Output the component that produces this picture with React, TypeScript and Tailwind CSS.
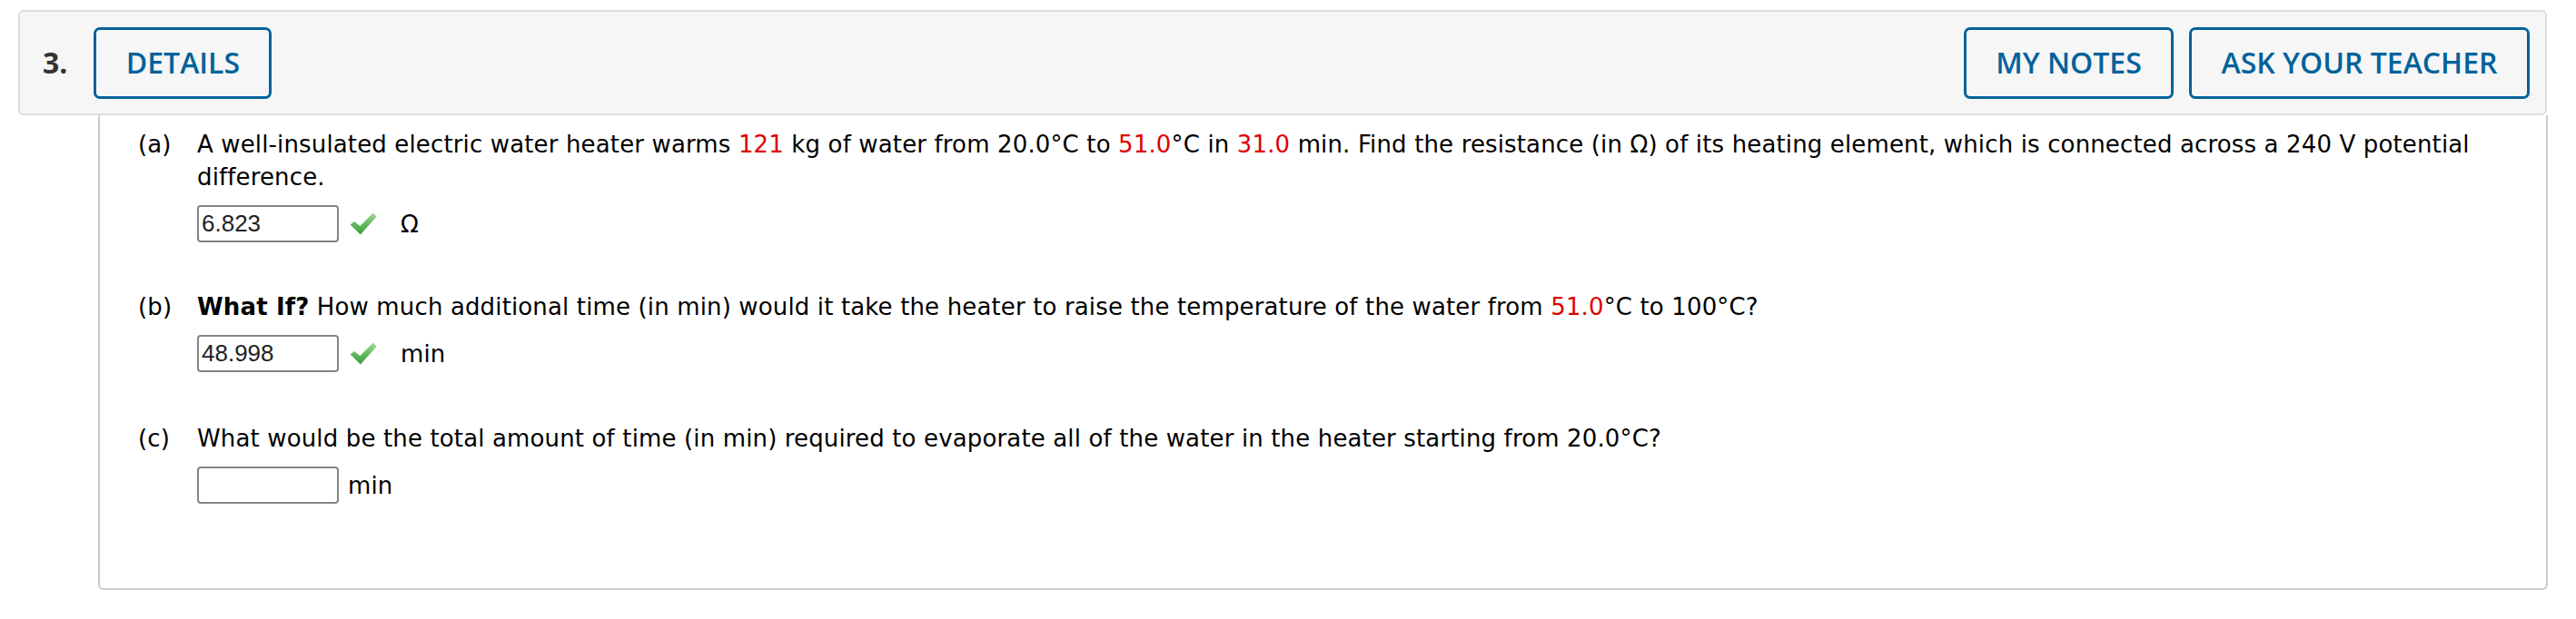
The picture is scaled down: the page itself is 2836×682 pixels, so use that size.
import type { ReactNode } from "react";

const body = "font-['DejaVu_Sans',Verdana,sans-serif] text-[26px] leading-[36px] tracking-[0.14px] text-black";

function Red({ children }: { children: ReactNode }) {
    return <span className="text-[#e00000]">{children}</span>;
}

function HeaderButton({ label, width }: { label: string; width: string }) {
    return (
        <button
            type="button"
            className={`${width} h-[79px] flex items-center justify-center rounded-[7px] border-[3px] border-[#00629b] bg-transparent font-['Open_Sans',sans-serif] text-[32px] font-semibold text-[#00629b]`}
        >
            {label}
        </button>
    );
}

function Check() {
    return (
        <svg width="30" height="25" viewBox="0 0 29 24" className="ml-[12px] shrink-0">
            <defs>
                <linearGradient id="chk" x1="0" y1="0" x2="0" y2="1">
                    <stop offset="0" stopColor="#a3dc9b" />
                    <stop offset="0.55" stopColor="#5fb85a" />
                    <stop offset="1" stopColor="#3f9a3d" />
                </linearGradient>
            </defs>
            <path d="M0.5 13 L5 9.5 L11 14.5 L25 0.5 L28.5 4.5 L11.5 23.5 Z" fill="url(#chk)" />
        </svg>
    );
}

function AnswerRow({ value, unit, correct }: { value: string; unit: string; correct?: boolean }) {
    return (
        <div className="mt-[13px] flex h-[41px] items-center">
            <div className="flex h-[41px] w-[156px] shrink-0 items-center rounded-[4px] border-2 border-[#858585] bg-white pl-[3px] font-['Liberation_Sans',Arial,sans-serif] text-[26px] text-[#222]">
                {value}
            </div>
            {correct ? (
                <>
                    <Check />
                    <span className={`${body} ml-[26px]`}>{unit}</span>
                </>
            ) : (
                <span className={`${body} ml-[10px]`}>{unit}</span>
            )}
        </div>
    );
}

function Part({
    label,
    className,
    children,
}: {
    label: string;
    className?: string;
    children: ReactNode;
}) {
    return (
        <div className={`flex ${className ?? ""}`}>
            <div className={`${body} w-[65px] shrink-0`}>{label}</div>
            <div className="min-w-0 flex-1">{children}</div>
        </div>
    );
}

export default function App() {
    return (
        <div className="min-h-[682px] w-[2836px] bg-white pl-[20px] pt-[11px]">
            <div className="flex h-[116px] w-[2784px] items-center rounded-[6px] border-2 border-[#dddddd] bg-[#f6f6f6] pl-[25px] pr-[17px]">
                <span className="font-['Open_Sans',sans-serif] text-[32px] font-bold text-[#333]">3.</span>
                <div className="ml-[29px]">
                    <HeaderButton label="DETAILS" width="w-[196px]" />
                </div>
                <div className="ml-auto flex gap-[17px]">
                    <HeaderButton label="MY NOTES" width="w-[231px]" />
                    <HeaderButton label="ASK YOUR TEACHER" width="w-[375px]" />
                </div>
            </div>

            <div className="ml-[88px] w-[2697px] rounded-b-[6px] border-2 border-t-0 border-[#cbcbcb] pb-[93px] pl-[42px] pr-[20px] pt-[14px]">
                <Part label="(a)">
                    <p className={body}>
                        A well-insulated electric water heater warms <Red>121</Red> kg of water from 20.0°C to{" "}
                        <Red>51.0</Red>°C in <Red>31.0</Red> min. Find the resistance (in Ω) of its heating
                        element, which is connected across a 240 V potential difference.
                    </p>
                    <AnswerRow value="6.823" unit="Ω" correct />
                </Part>

                <Part label="(b)" className="mt-[53px]">
                    <p className={body}>
                        <b className="font-bold">What If?</b> How much additional time (in min) would it take the
                        heater to raise the temperature of the water from <Red>51.0</Red>°C to 100°C?
                    </p>
                    <AnswerRow value="48.998" unit="min" correct />
                </Part>

                <Part label="(c)" className="mt-[55px]">
                    <p className={body}>
                        What would be the total amount of time (in min) required to evaporate all of the water in
                        the heater starting from 20.0°C?
                    </p>
                    <AnswerRow value="" unit="min" />
                </Part>
            </div>
        </div>
    );
}
